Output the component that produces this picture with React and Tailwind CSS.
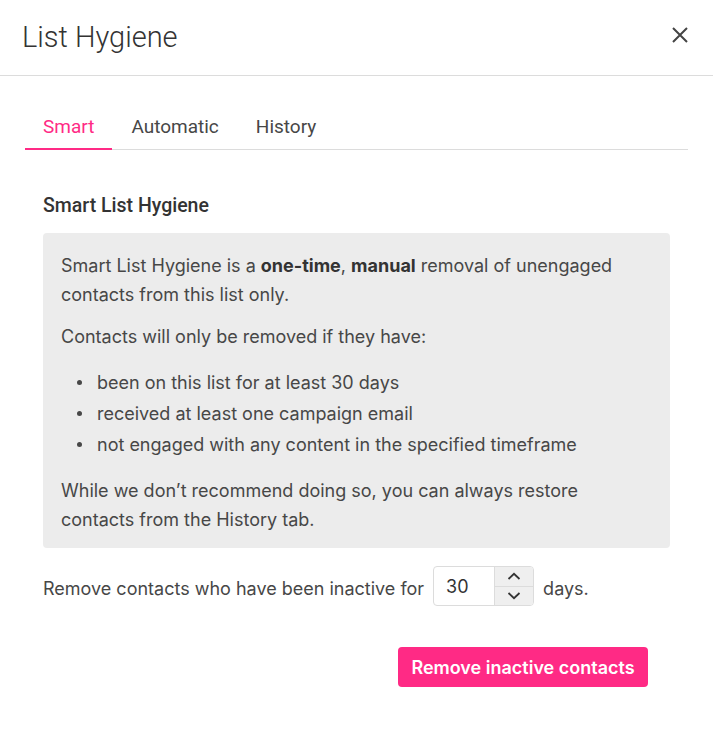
import React from "react";

export default function App() {
  const bullets = [
    "been on this list for at least 30 days",
    "received at least one campaign email",
    "not engaged with any content in the specified timeframe",
  ];
  return (
    <div className="w-[713px] h-[750px] bg-white text-[#474747]" style={{ fontFamily: "Inter, 'Noto Sans', sans-serif" }}>
      <div className="h-[76px] border-b border-[#dcdcdc] flex items-center justify-between pl-[22px] pr-[24px]">
        <h1 className="text-[29px] text-[#333] font-[Roboto] font-light leading-none">List Hygiene</h1>
        <svg width="18" height="18" viewBox="0 0 18 18" className="text-[#444] -mt-[6px]">
          <path d="M2 2 L16 16 M16 2 L2 16" stroke="currentColor" strokeWidth="2" />
        </svg>
      </div>
      <div className="px-[25px] pt-[39px]">
        <div className="flex border-b border-[#dcdcdc] font-[Roboto] text-[19px] leading-[24px]">
          <div className="px-[18px] pb-[9px] text-[#ff2a85] border-b-2 border-[#ff2a85] -mb-px">Smart</div>
          <div className="px-[19px] pb-[9px] text-[#474747]">Automatic</div>
          <div className="px-[18px] pb-[9px] text-[#474747]">History</div>
        </div>
      </div>
      <div className="px-[43px] pt-[46px]">
        <h2 className="font-[Roboto] font-medium text-[19.5px] text-[#333] leading-[20px]">Smart List Hygiene</h2>
        <div className="mt-[17px] bg-[#ececec] rounded-[4px] w-[627px] pl-[18px] pr-[18px] pt-[18px] pb-[14px] text-[18px] leading-[29px]">
          <p>
            Smart List Hygiene is a <b className="text-[#333]">one-time</b>, <b className="text-[#333]">manual</b> removal of unengaged contacts from this list only.
          </p>
          <p className="mt-[13px]">Contacts will only be removed if they have:</p>
          <ul className="mt-[16px] leading-[31px]">
            {bullets.map((b) => (
              <li key={b} className="flex items-center">
                <span className="ml-[16px] w-[5px] h-[5px] rounded-full bg-[#474747]" />
                <span className="ml-[15px]">{b}</span>
              </li>
            ))}
          </ul>
          <p className="mt-[16px] pr-[70px]">While we don’t recommend doing so, you can always restore contacts from the History tab.</p>
        </div>
        <div className="mt-[18px] flex items-center text-[18px]">
          <span className="mt-[5px]">Remove contacts who have been inactive for</span>
          <div className="ml-[9px] flex h-[40px] w-[101px] border border-[#dcdcdc] rounded-[4px] overflow-hidden">
            <div className="flex-1 flex items-center pl-[12px] text-[#333]">30</div>
            <div className="w-[39px] bg-[#efefef] border-l border-[#dcdcdc] flex flex-col">
              <div className="flex-1 flex items-center justify-center border-b border-[#dcdcdc]">
                <svg width="14" height="8" viewBox="0 0 14 8"><path d="M1.5 7 L7 1.8 L12.5 7" fill="none" stroke="#333" strokeWidth="1.8" /></svg>
              </div>
              <div className="flex-1 flex items-center justify-center">
                <svg width="14" height="8" viewBox="0 0 14 8"><path d="M1.5 1 L7 6.2 L12.5 1" fill="none" stroke="#333" strokeWidth="1.8" /></svg>
              </div>
            </div>
          </div>
          <span className="ml-[9px] mt-[5px]">days.</span>
        </div>
        <div className="flex justify-end pr-[22px] mt-[41px]">
          <button className="h-[40px] w-[250px] bg-[#ff2a85] text-white font-semibold text-[18px] rounded-[4px]">Remove inactive contacts</button>
        </div>
      </div>
    </div>
  );
}
